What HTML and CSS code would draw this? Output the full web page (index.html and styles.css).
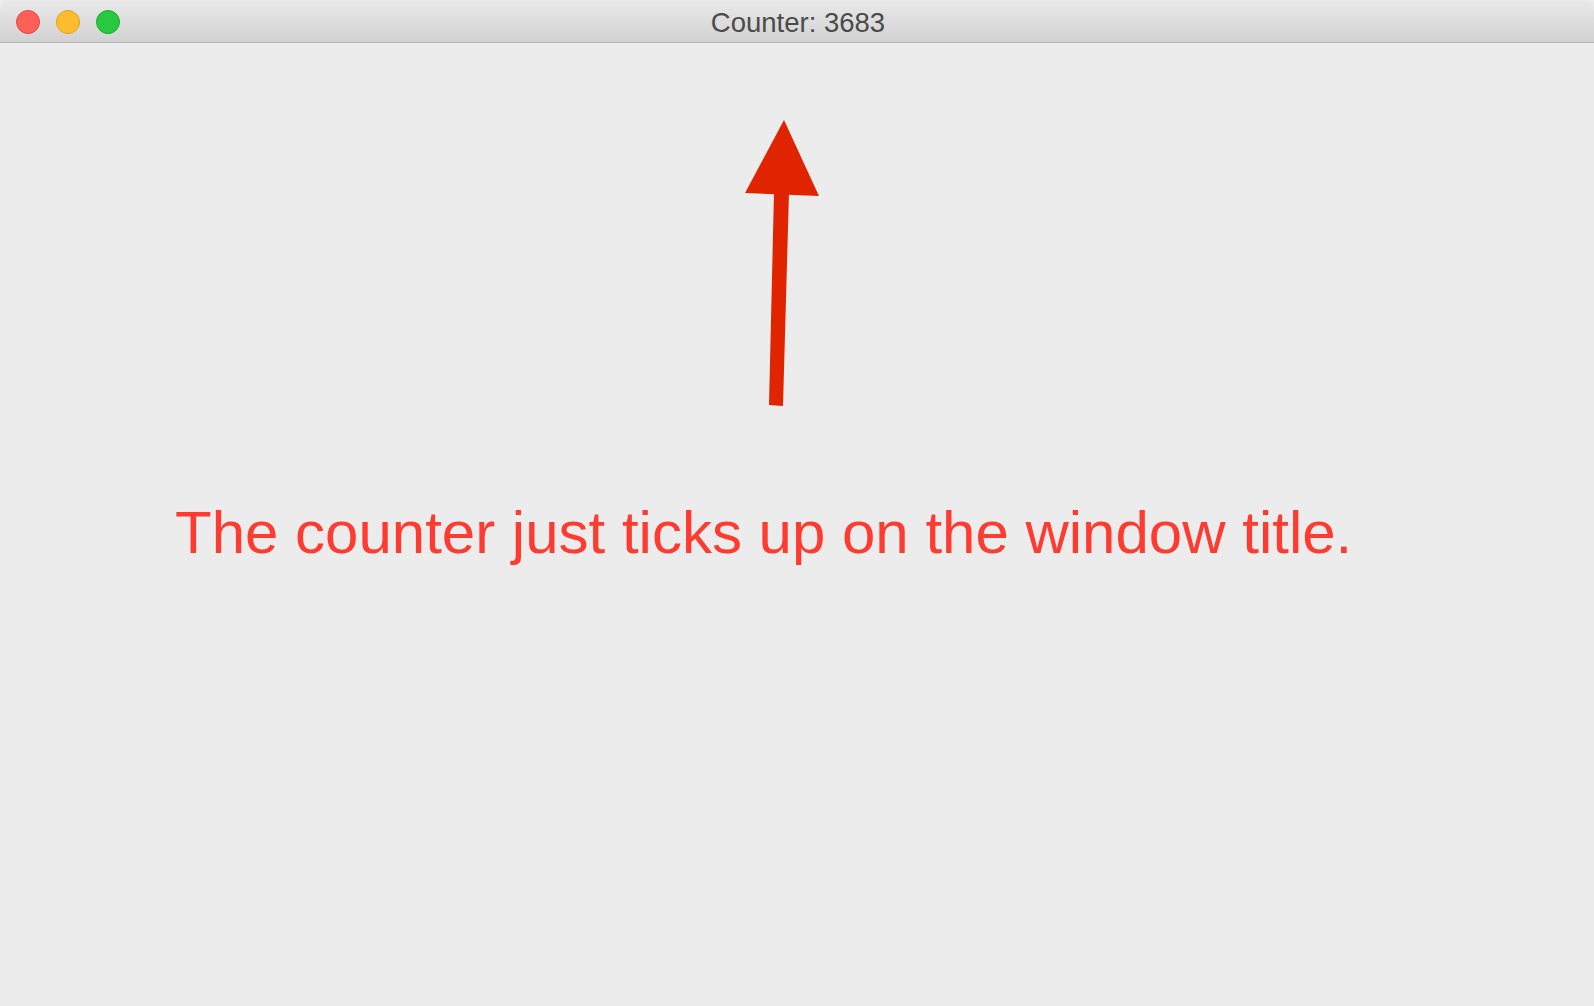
FILE: index.html
```html
<!DOCTYPE html>
<html>
<head>
<meta charset="utf-8">
<title>Counter: 3683</title>
<link rel="stylesheet" href="styles.css">
</head>
<body>
<div class="window">
  <div class="titlebar">
    <div class="lights">
      <span class="light red"></span>
      <span class="light yellow"></span>
      <span class="light green"></span>
    </div>
    <div class="title">Counter: 3683</div>
  </div>
  <div class="content">
    <svg class="arrow" width="80" height="290" viewBox="742 118 80 290">
      <polygon points="784,120 745,193 819,196" fill="#e02400"/>
      <polygon points="774,192 789,192 783,406 769,405" fill="#e02400"/>
    </svg>
    <p class="message">The counter just ticks up on the window title.</p>
  </div>
</div>
</body>
</html>
```

FILE: styles.css
```css
html, body {
  margin: 0;
  padding: 0;
  background: #ececec;
}
.window {
  width: 1594px;
  height: 1006px;
  display: flex;
  flex-direction: column;
  background: #ececec;
  font-family: "Liberation Sans", Arial, sans-serif;
}
.titlebar {
  position: relative;
  height: 42px;
  flex: 0 0 42px;
  background: linear-gradient(#e9e9e9, #d2d2d2);
  border-bottom: 1px solid #b4b4b4;
  border-radius: 10px 10px 0 0;
  display: flex;
  align-items: center;
  justify-content: center;
}
.lights {
  position: absolute;
  left: 16px;
  top: 10px;
  display: flex;
  gap: 16px;
}
.light {
  width: 24px;
  height: 24px;
  border-radius: 50%;
  box-sizing: border-box;
}
.red { background: #fe5f57; border: 1px solid #e2463f; }
.yellow { background: #febc2e; border: 1px solid #e1a116; }
.green { background: #28c840; border: 1px solid #14ae2b; }
.title {
  font-size: 27.5px;
  color: #4b4b4b;
  padding-top: 3px;
  padding-left: 2px;
}
.content {
  flex: 1;
  display: flex;
  flex-direction: column;
}
.arrow {
  display: block;
  margin-top: 75px;
  margin-left: 742px;
}
.message {
  margin: 95px 0 0 175px;
  font-size: 60px;
  line-height: 60px;
  color: #fe3b30;
  white-space: nowrap;
}
```
